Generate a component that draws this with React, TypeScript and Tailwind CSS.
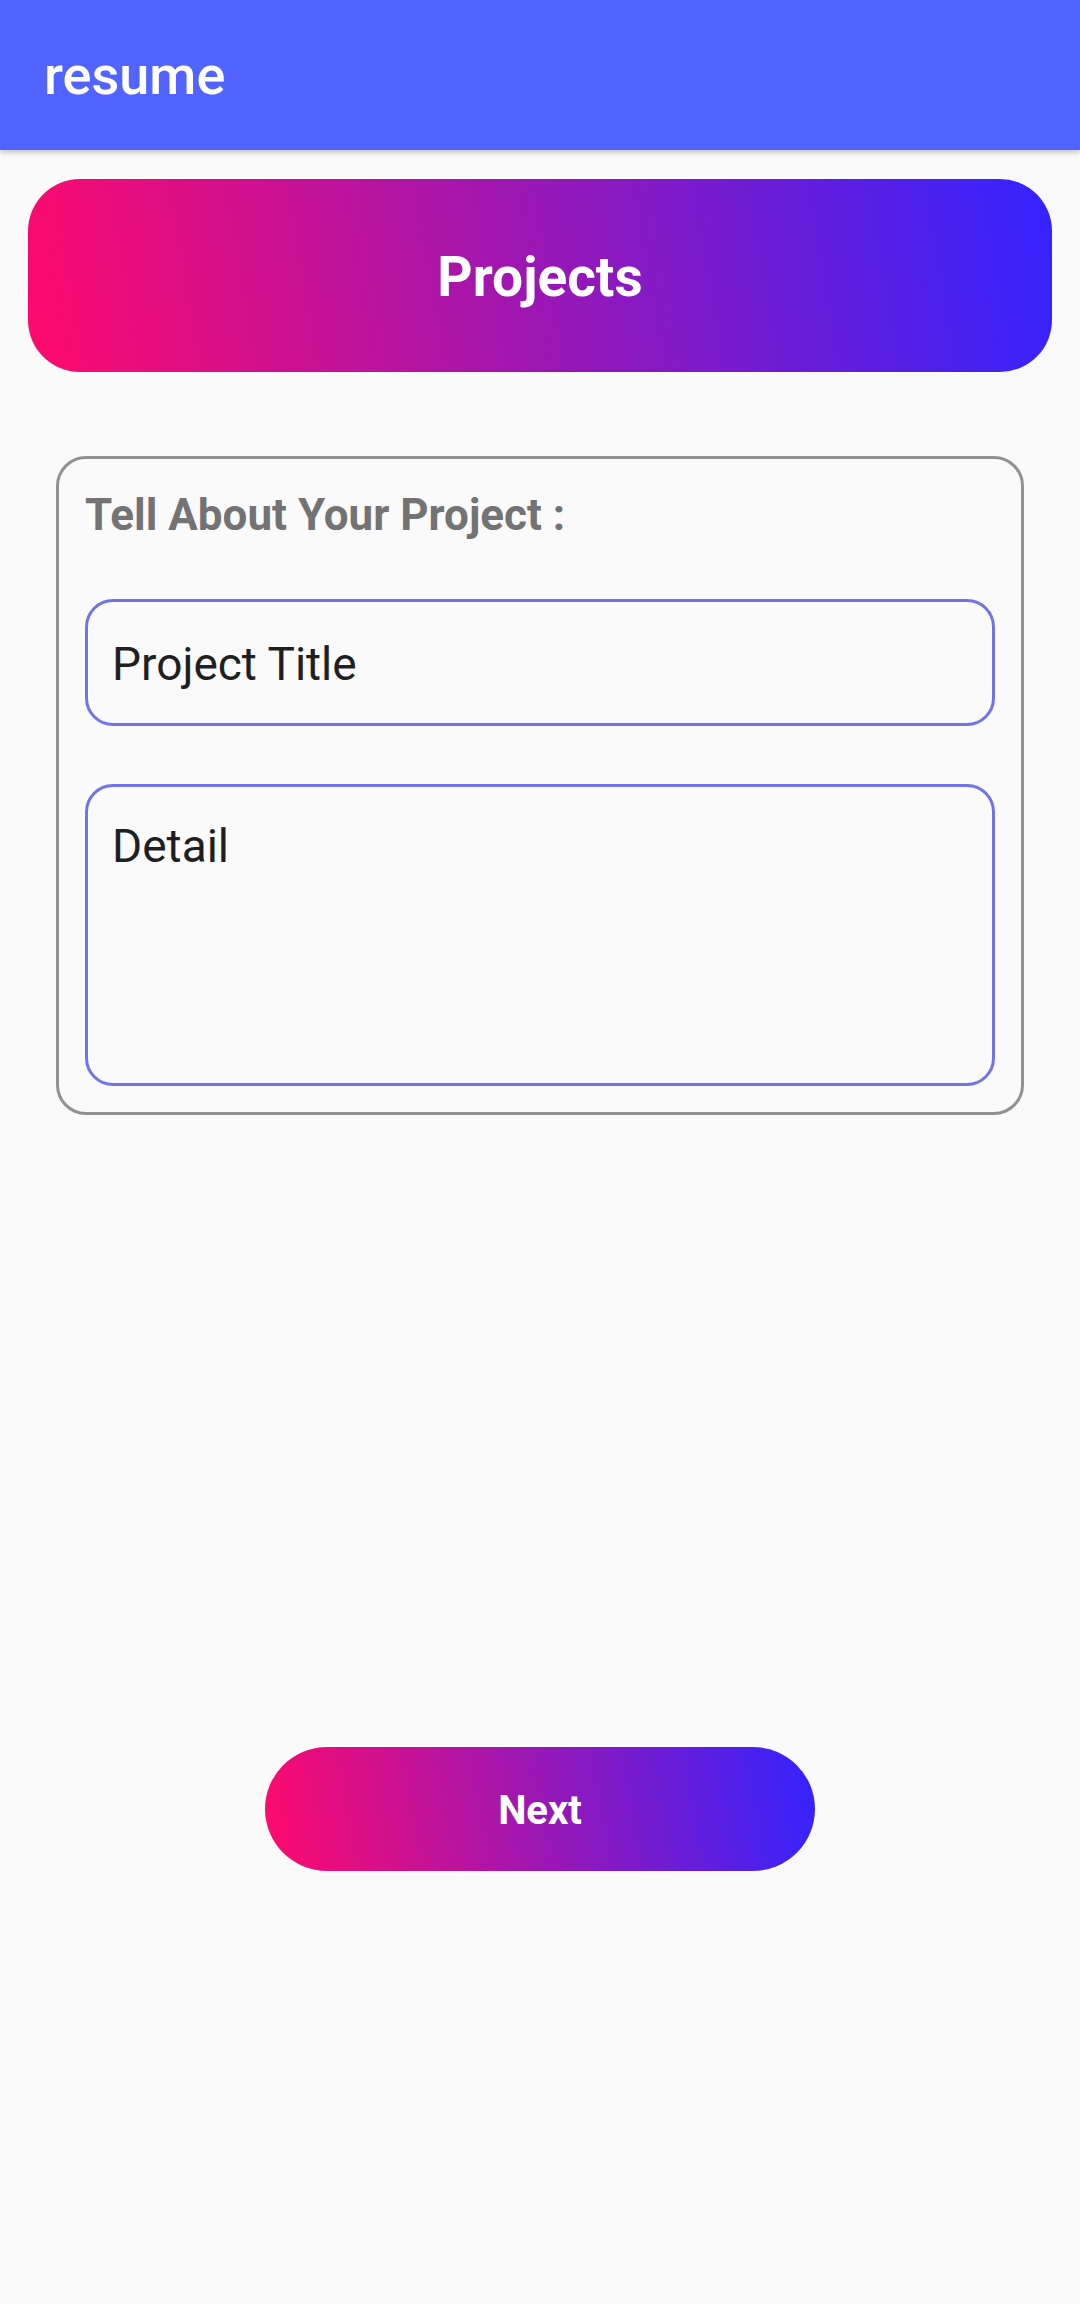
export default function App() {
  return (
    <div className="min-h-[2304px] bg-[#fafafa] font-['Roboto',sans-serif]">
      <header className="h-[150px] bg-[#5264ff] flex items-center pl-[44px] pt-[2px] shadow-[0_2px_6px_rgba(0,0,0,0.25)] relative">
        <h1 className="text-[54px] font-medium text-white leading-none">resume</h1>
      </header>

      <div className="px-[28px] pt-[29px]">
        <div className="h-[193px] rounded-[52px] bg-[linear-gradient(80deg,#ff0a6c,#a416ad_45%,#3323ff)] flex items-center justify-center">
          <span className="text-[55px] font-bold text-white leading-none pt-[4px]">Projects</span>
        </div>
      </div>

      <div className="px-[56px] pt-[84px]">
        <div className="border-[3px] border-[#919191] rounded-[30px] px-[26px] pt-[30px] pb-[26px]">
          <p className="text-[44px] font-bold text-[#737373] leading-[52px]">Tell About Your Project :</p>

          <div className="mt-[58px] h-[127px] border-[3px] border-[#7373e8] rounded-[28px] flex items-center px-[24px]">
            <span className="text-[46px] text-[#1f1f1f] leading-[54px] pt-[3px]">Project Title</span>
          </div>

          <div className="mt-[58px] h-[302px] border-[3px] border-[#7373e8] rounded-[28px] px-[24px] pt-[32px]">
            <span className="text-[46px] text-[#1f1f1f] leading-[54px]">Detail</span>
          </div>
        </div>
      </div>

      <div className="flex justify-center pt-[632px]">
        <button className="w-[550px] h-[124px] rounded-full bg-[linear-gradient(80deg,#ff0a6c,#a416ad_45%,#3323ff)] flex items-center justify-center">
          <span className="text-[40px] font-bold text-white leading-none pt-[4px]">Next</span>
        </button>
      </div>
    </div>
  );
}
